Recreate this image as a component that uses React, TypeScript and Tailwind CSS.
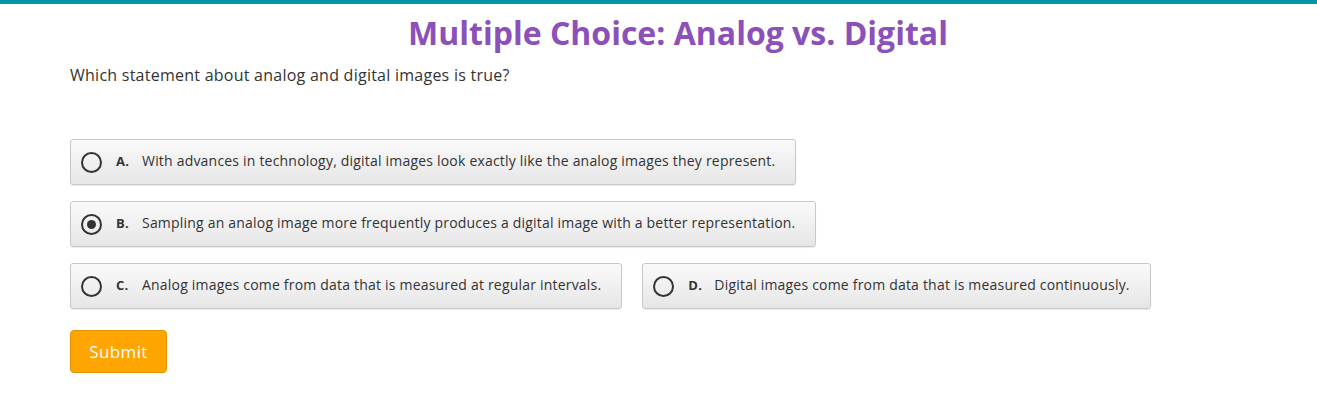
import React, { useState } from "react";

interface Choice {
  key: string;
  text: string;
}

const choices: Choice[][] = [
  [{ key: "A", text: "With advances in technology, digital images look exactly like the analog images they represent." }],
  [{ key: "B", text: "Sampling an analog image more frequently produces a digital image with a better representation." }],
  [
    { key: "C", text: "Analog images come from data that is measured at regular intervals." },
    { key: "D", text: "Digital images come from data that is measured continuously." },
  ],
];

const Radio = ({ checked }: { checked: boolean }) => (
  <span className="flex h-[21px] w-[21px] shrink-0 items-center justify-center rounded-full border-2 border-[#333]">
    {checked && <span className="h-[9px] w-[9px] rounded-full bg-[#333]" />}
  </span>
);

export default function App() {
  // state
  const [selected, setSelected] = useState("B");

  return (
    <div className="min-h-[402px] bg-white font-['Open_Sans',sans-serif] text-[#333]">
      <div className="h-[4px] bg-[#0095a5]" />
      <h1 className="mt-[10px] pl-[39px] text-center text-[32px] font-bold leading-[38px] text-[#8b50ba]">
        Multiple Choice: Analog vs. Digital
      </h1>
      <div className="px-[70px]">
        <p className="mt-[12px] text-[16px] leading-[22px] tracking-[0.25px]">
          Which statement about analog and digital images is true?
        </p>
        <div className="mt-[53px] flex flex-col gap-[16px]">
          {choices.map((row, i) => (
            <div key={i} className="flex gap-[20px]">
              {row.map((c) => (
                <button
                  key={c.key}
                  onClick={() => setSelected(c.key)}
                  className="flex h-[46px] items-center rounded-[3px] border border-[#c8c8c8] bg-gradient-to-b from-[#fafafa] to-[#e6e6e6] pl-[10px] pr-[20px] text-left text-[14px] tracking-[0.2px] shadow-[0_1px_1px_rgba(0,0,0,0.08)]"
                >
                  <Radio checked={selected === c.key} />
                  <span className="ml-[14px] mb-[3px] leading-[20px]">
                    <b className="inline-block w-[26px] text-[13px] font-bold">{c.key}.</b>
                    {c.text}
                  </span>
                </button>
              ))}
            </div>
          ))}
        </div>
        <button className="mt-[21px] h-[43px] w-[97px] rounded-[4px] border border-[#e39400] bg-[#ffa500] text-[17px] tracking-[0.4px] text-white">
          Submit
        </button>
      </div>
    </div>
  );
}
